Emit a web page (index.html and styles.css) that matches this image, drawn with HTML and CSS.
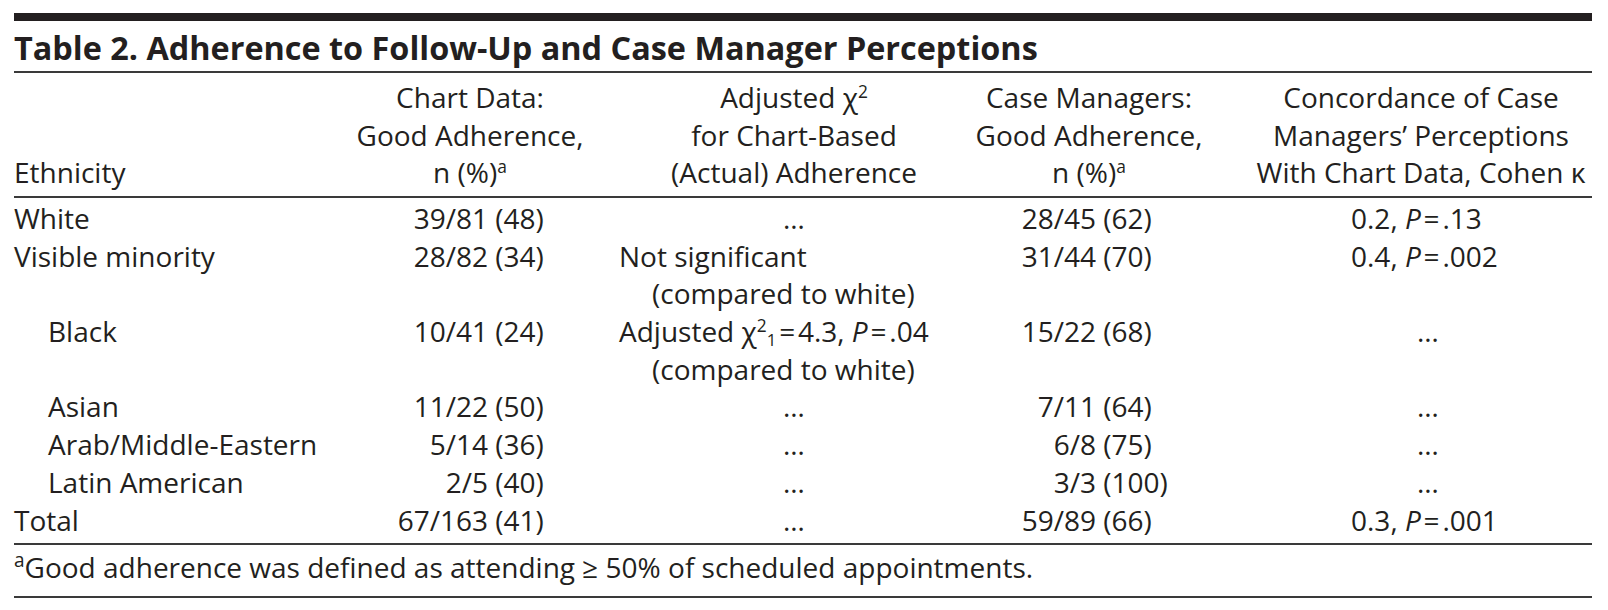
FILE: index.html
```html
<!DOCTYPE html>
<html lang="en">
<head>
<meta charset="utf-8">
<title>Table 2</title>
<link rel="stylesheet" href="styles.css">
</head>
<body>
<div class="table">
  <div class="topbar"></div>
  <h1 class="title">Table 2. Adherence to Follow-Up and Case Manager Perceptions</h1>
  <div class="row head">
    <div class="c c1">Ethnicity</div>
    <div class="c c2">Chart Data:<br>Good Adherence,<br>n (%)<sup>a</sup></div>
    <div class="c c3">Adjusted χ<sup>2</sup><br>for Chart-Based<br>(Actual) Adherence</div>
    <div class="c c4">Case Managers:<br>Good Adherence,<br>n (%)<sup>a</sup></div>
    <div class="c c5">Concordance of Case<br>Managers’ Perceptions<br>With Chart Data, Cohen κ</div>
  </div>
  <div class="tbody">
    <div class="row">
      <div class="c c1">White</div>
      <div class="c c2"><span class="frac">39/81</span> <span>(48)</span></div>
      <div class="c c3"><div class="ell">…</div></div>
      <div class="c c4"><span class="frac">28/45</span> <span>(62)</span></div>
      <div class="c c5"><div class="val">0.2, <i>P</i>&#8202;=&#8202;.13</div></div>
    </div>
    <div class="row">
      <div class="c c1">Visible minority</div>
      <div class="c c2"><span class="frac">28/82</span> <span>(34)</span></div>
      <div class="c c3"><div>Not significant</div><div class="cont">(compared to white)</div></div>
      <div class="c c4"><span class="frac">31/44</span> <span>(70)</span></div>
      <div class="c c5"><div class="val">0.4, <i>P</i>&#8202;=&#8202;.002</div></div>
    </div>
    <div class="row">
      <div class="c c1 sub">Black</div>
      <div class="c c2"><span class="frac">10/41</span> <span>(24)</span></div>
      <div class="c c3"><div>Adjusted χ<sup>2</sup><sub>1</sub>&#8202;=&#8202;4.3, <i>P</i>&#8202;=&#8202;.04</div><div class="cont">(compared to white)</div></div>
      <div class="c c4"><span class="frac">15/22</span> <span>(68)</span></div>
      <div class="c c5"><div class="val ell5">…</div></div>
    </div>
    <div class="row">
      <div class="c c1 sub">Asian</div>
      <div class="c c2"><span class="frac">11/22</span> <span>(50)</span></div>
      <div class="c c3"><div class="ell">…</div></div>
      <div class="c c4"><span class="frac">7/11</span> <span>(64)</span></div>
      <div class="c c5"><div class="val ell5">…</div></div>
    </div>
    <div class="row">
      <div class="c c1 sub">Arab/Middle-Eastern</div>
      <div class="c c2"><span class="frac">5/14</span> <span>(36)</span></div>
      <div class="c c3"><div class="ell">…</div></div>
      <div class="c c4"><span class="frac">6/8</span> <span>(75)</span></div>
      <div class="c c5"><div class="val ell5">…</div></div>
    </div>
    <div class="row">
      <div class="c c1 sub">Latin American</div>
      <div class="c c2"><span class="frac">2/5</span> <span>(40)</span></div>
      <div class="c c3"><div class="ell">…</div></div>
      <div class="c c4"><span class="frac">3/3</span> <span>(100)</span></div>
      <div class="c c5"><div class="val ell5">…</div></div>
    </div>
    <div class="row">
      <div class="c c1">Total</div>
      <div class="c c2"><span class="frac">67/163</span> <span>(41)</span></div>
      <div class="c c3"><div class="ell">…</div></div>
      <div class="c c4"><span class="frac">59/89</span> <span>(66)</span></div>
      <div class="c c5"><div class="val">0.3, <i>P</i>&#8202;=&#8202;.001</div></div>
    </div>
  </div>
  <p class="foot"><sup>a</sup>Good adherence was defined as attending ≥ 50% of scheduled appointments.</p>
</div>
</body>
</html>
```

FILE: styles.css
```css
body {
  margin: 0;
  background: #ffffff;
  color: #231f20;
  font-family: "Open Sans", "Noto Sans", sans-serif;
}

.table {
  margin: 13px 0 0 14px;
  width: 1578px;
}

.topbar {
  height: 8px;
  background: #231f20;
}

.title {
  margin: 0;
  padding: 6px 0 4px;
  font-size: 32.4px;
  font-weight: 700;
  line-height: 40px;
  border-bottom: 2px solid #3a3a3a;
}

.row {
  display: grid;
  grid-template-columns: 338px 236px 381px 237px 386px;
}

.c3 { padding-left: 31px; }
.c4 { padding-left: 3px; }
.c5 { padding-left: 44px; }

.head {
  font-size: 28px;
  line-height: 37.5px;
  padding: 6px 0 4px;
  border-bottom: 2px solid #3a3a3a;
}

.head .c {
  align-self: end;
  text-align: center;
  white-space: nowrap;
}

.head .c1 {
  text-align: left;
}

sup {
  font-size: 0.62em;
  line-height: 0;
  vertical-align: 0.6em;
}

sub {
  font-size: 0.6em;
  line-height: 0;
  vertical-align: -0.25em;
}

.tbody {
  font-size: 28px;
  line-height: 37.7px;
  padding: 2.4px 0 4px;
  border-bottom: 2px solid #3a3a3a;
}

.tbody .c {
  white-space: nowrap;
}

.sub {
  padding-left: 34px;
}

.frac {
  display: inline-block;
}

.c2 .frac { width: 136px; text-align: right; }
.c4 .frac { width: 124px; text-align: right; }

.ell {
  text-align: center;
}

.cont {
  padding-left: 33px;
}

.val {
  margin-left: 101px;
}

.ell5 {
  width: 154px;
  text-align: center;
}

.foot {
  margin: 0;
  font-size: 28px;
  line-height: 37.5px;
  padding: 4.2px 0 8.8px;
  border-bottom: 2px solid #3a3a3a;
}

.foot sup {
  font-size: 0.68em;
}
```
